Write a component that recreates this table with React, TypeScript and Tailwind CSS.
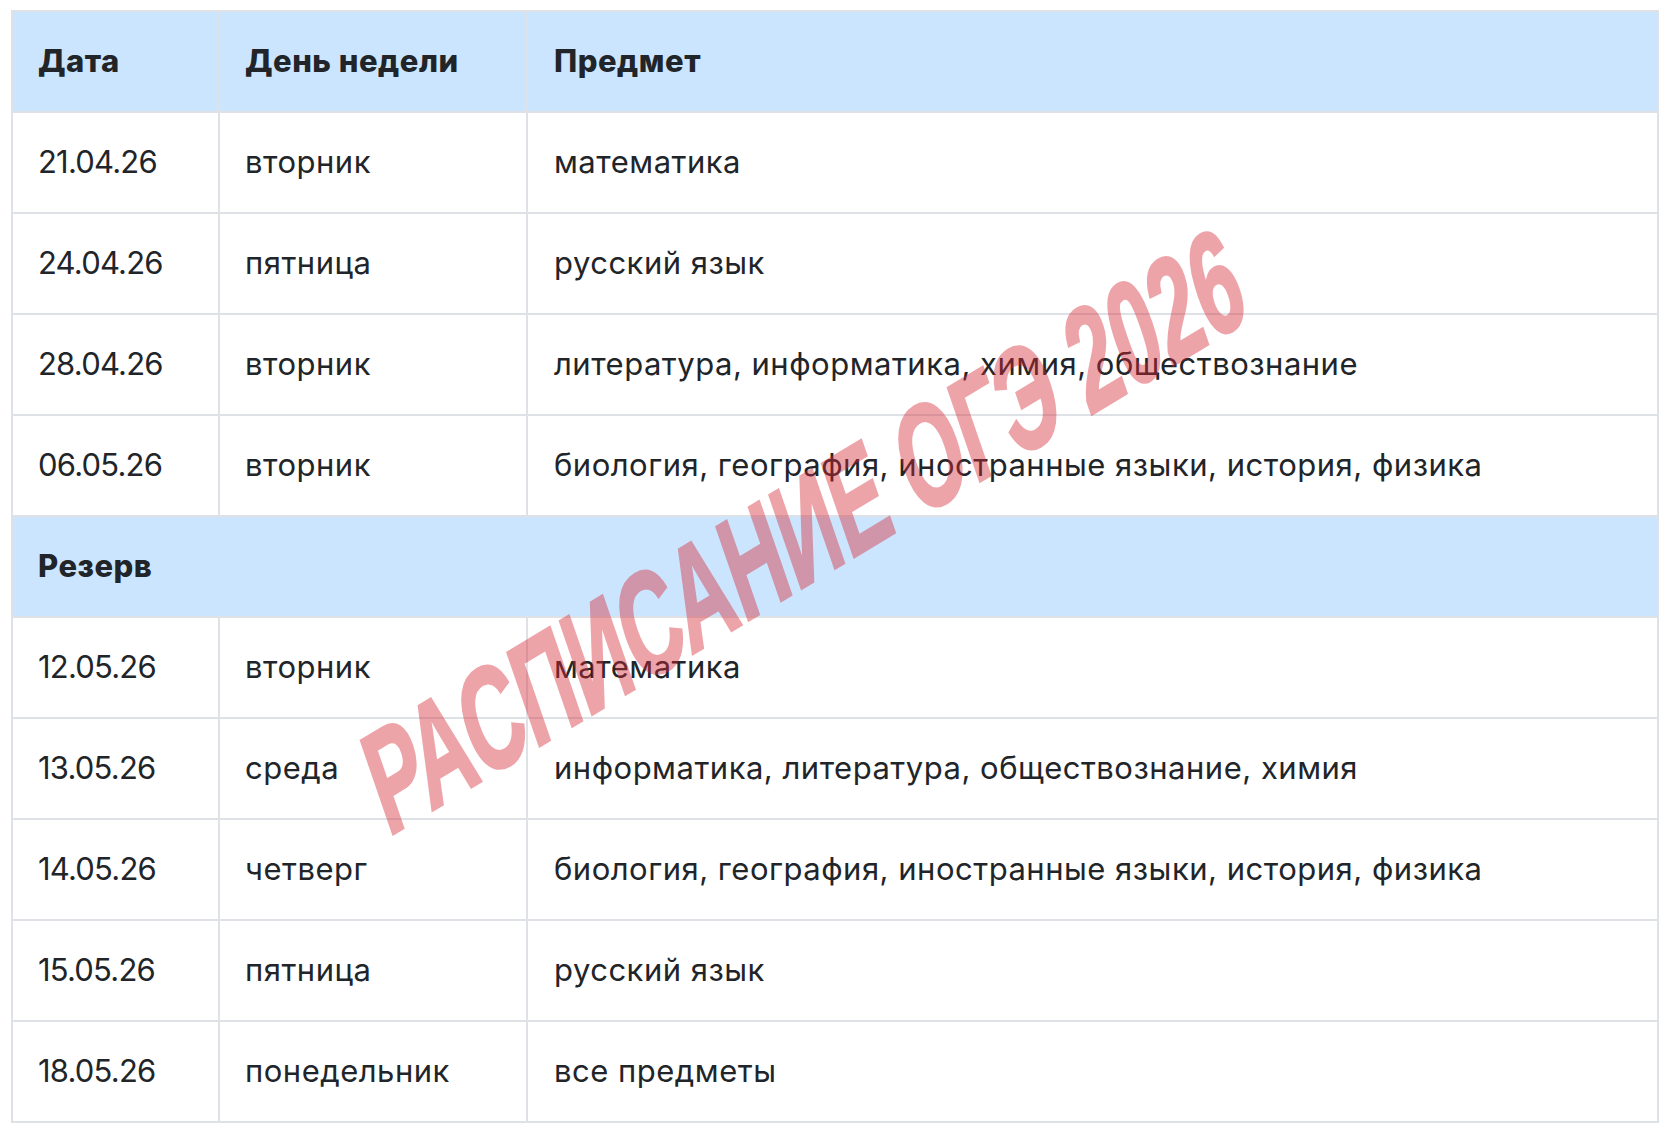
import React from 'react';

type Row = { date: string; day: string; subject: string };

const mainRows: Row[] = [
  { date: '21.04.26', day: 'вторник', subject: 'математика' },
  { date: '24.04.26', day: 'пятница', subject: 'русский язык' },
  { date: '28.04.26', day: 'вторник', subject: 'литература, информатика, химия, обществознание' },
  { date: '06.05.26', day: 'вторник', subject: 'биология, география, иностранные языки, история, физика' },
];

const reserveRows: Row[] = [
  { date: '12.05.26', day: 'вторник', subject: 'математика' },
  { date: '13.05.26', day: 'среда', subject: 'информатика, литература, обществознание, химия' },
  { date: '14.05.26', day: 'четверг', subject: 'биология, география, иностранные языки, история, физика' },
  { date: '15.05.26', day: 'пятница', subject: 'русский язык' },
  { date: '18.05.26', day: 'понедельник', subject: 'все предметы' },
];

const cell = 'h-[101px] flex items-center pl-[25px] border-r-2 border-b-2 border-[#dee2e6]';

function TableRow({ row }: { row: Row }) {
  return (
    <div className="grid grid-cols-[207px_308px_1fr]">
      <div className={cell + ' tracking-[-0.8px]'}>{row.date}</div>
      <div className={cell}>{row.day}</div>
      <div className={cell + ' pl-[26px]'}>{row.subject}</div>
    </div>
  );
}

export default function App() {
  return (
    <div
      className="relative w-[1670px] h-[1132px] bg-white text-[#212529] text-[31px] tracking-[0.5px] overflow-hidden"
      style={{ fontFamily: 'Inter, "Noto Sans", sans-serif' }}
    >
      <div className="absolute left-0 top-0 pl-[11px] pt-[10px]">
        <div className="w-[1648px] border-l-2 border-t-2 border-[#dee2e6]">
          {/* Header */}
          <div className="grid grid-cols-[207px_308px_1fr] bg-[#cce5ff] font-extrabold">
            <div className={cell}>Дата</div>
            <div className={cell}>День недели</div>
            <div className={cell + ' pl-[26px]'}>Предмет</div>
          </div>

          {mainRows.map((r) => (
            <TableRow key={r.date} row={r} />
          ))}

          {/* Reserve */}
          <div className="bg-[#cce5ff] font-extrabold">
            <div className={cell}>Резерв</div>
          </div>

          {reserveRows.map((r) => (
            <TableRow key={r.date} row={r} />
          ))}
        </div>
      </div>

      {/* Watermark */}
      <div
        className="absolute left-[804px] top-[531px] pointer-events-none whitespace-nowrap leading-none font-bold tracking-normal text-[140px] text-[#d62834] opacity-[0.42] [-webkit-text-stroke:3px_#d62834] [transform:translate(-50%,-50%)_rotate(-31deg)_skewX(-12deg)_scaleX(0.61)]"
        style={{ fontFamily: '"Liberation Sans", Arial, sans-serif' }}
      >
        РАСПИСАНИЕ ОГЭ 2026
      </div>
    </div>
  );
}
